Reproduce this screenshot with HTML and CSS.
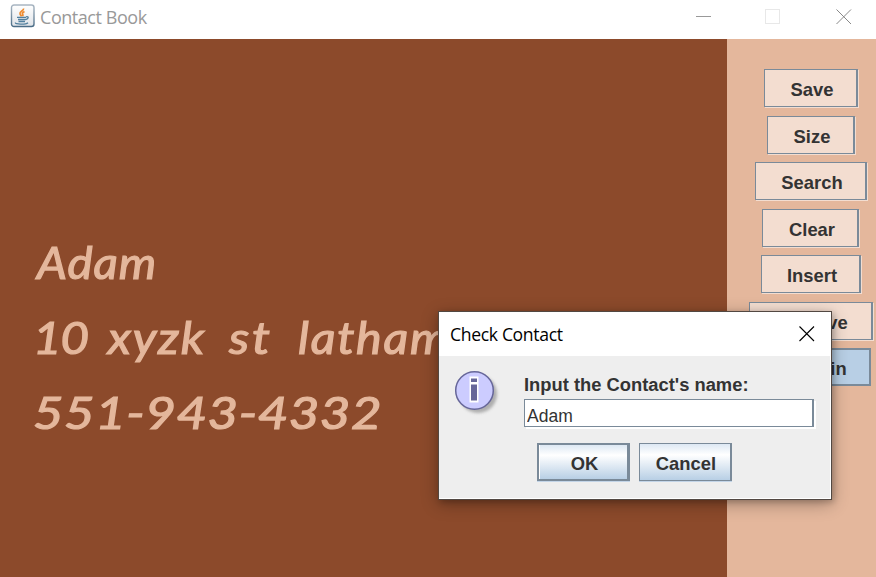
FILE: index.html
```
<!DOCTYPE html>
<html lang="en">
<head>
<meta charset="utf-8">
<title>Contact Book</title>
<link rel="stylesheet" href="styles.css">
</head>
<body>
<header class="titlebar">
  <svg class="java" width="25" height="25" viewBox="0 0 25 25">
    <defs><linearGradient id="ji" x1="0" y1="0" x2="0" y2="1"><stop offset="0" stop-color="#fff"/><stop offset="1" stop-color="#dfe3e8"/></linearGradient>
    <linearGradient id="jb" x1="0" y1="0" x2="0" y2="1"><stop offset="0" stop-color="#a9b6c2"/><stop offset="1" stop-color="#4b6d87"/></linearGradient></defs>
    <rect x="1.500" y="1" width="22.500" height="21.500" rx="2.500" fill="url(#ji)" stroke="url(#jb)" stroke-width="1.400"/>
    <path d="M13.500 4.500c.6 2.200-4.300 3-3.500 5.400.2.900 1 1.500 1.700 2.400M14.500 7.500c-2.400 1.200-2.600 2-1.700 2.900.5.800.2 1.200-.4 1.800" fill="none" stroke="#ee8a2e" stroke-width="1.700"/>
    <path d="M7 13.300h9M8 15.500h8M8.500 17.500h6.500M16 12.800c3.200-.7 2.800 2-.3 2.900M5.500 18.500c-1.200 2 10.500 2.200 12.500.2" fill="none" stroke="#52809f" stroke-width="1.300"/>
  </svg>
  <h1 class="app-name">Contact Book</h1>
  <svg class="controls" width="156" height="16" viewBox="0 0 156 16" fill="none">
    <path d="M0 7.500h15" stroke="#999"/>
    <rect x="69.500" y=".5" width="14" height="14" stroke="#e8e8e8"/>
    <path d="M140.500.5l14.500 14.500M155 .5l-14.500 14.500" stroke="#888"/>
  </svg>
</header>
<main class="workspace">
  <section class="contact">
    <p class="line"><span class="w adam">Adam</span></p>
    <p class="line"><span class="w ten">10</span><span class="w xyzk">xyzk</span><span class="w st">st</span><span class="w latham">latham</span></p>
    <p class="line"><span class="w phone">551-943-4332</span></p>
  </section>
  <nav class="side">
    <button class="btn save">Save</button>
    <button class="btn size">Size</button>
    <button class="btn search">Search</button>
    <button class="btn clear">Clear</button>
    <button class="btn insert">Insert</button>
    <button class="btn remove">Remove</button>
    <button class="btn contain">Contain</button>
  </nav>
</main>
<div class="dialog" role="dialog">
  <div class="dialog-title"><span class="dialog-name">Check Contact</span>
    <svg width="16" height="16" viewBox="0 0 16 16"><path d="M.5.5l14.500 14.500M15 .5L.5 15" stroke="#000" stroke-width="1.100"/></svg>
  </div>
  <div class="dialog-body">
    <svg class="info" width="50" height="50" viewBox="0 0 50 50">
      <defs><filter id="soft"><feGaussianBlur stdDeviation="1.800"/></filter></defs>
      <circle cx="24" cy="24" r="19" fill="#999" opacity=".75" filter="url(#soft)"/>
      <circle cx="20.500" cy="20.500" r="18.800" fill="#ccf" stroke="#669" stroke-width="1.500"/>
      <path d="M15.500 6.500h9v26h-9z" fill="#fff"/>
      <path d="M17 8.500h6v3.500h-6zM17 14.500h6v16h-6z" fill="#669"/>
    </svg>
    <div class="form">
      <label class="prompt" for="name">Input the Contact's name:</label>
      <input class="field" id="name" value="Adam">
      <div class="actions"><button class="action ok">OK</button><button class="action">Cancel</button></div>
    </div>
  </div>
</div>
</body>
</html>
```
FILE: styles.css
```
* { box-sizing: border-box; }
body { margin: 0; width: 876px; height: 577px; overflow: hidden; background: #fff; font-family: "Liberation Sans", Arial, sans-serif; }
.titlebar { display: flex; height: 39px; padding: 4px 24px 0 10px; align-items: flex-start; }
.java { flex: none; }
.app-name { margin: 0 0 0 5px; font: 400 18px/27px "Open Sans", sans-serif; color: #999; letter-spacing: -.45px; flex: 1; }
.controls { margin-top: 5px; }
.workspace { display: flex; height: 538px; }
.contact { width: 727px; background: #8c4a2b; padding: 186px 0 0 37px; }
.line { display: flex; margin: 0; height: 75px; font: italic 400 44px/75px Lato, sans-serif; color: #e4b79c; -webkit-text-stroke: 1.2px #e4b79c; white-space: nowrap; }
.w { flex: none; transform-origin: 0 50%; }
.adam { transform: scaleX(1.08); letter-spacing: .9px; }
.ten { width: 75px; margin-left: -4px; transform: scaleX(1.12); letter-spacing: -1px; }
.xyzk { width: 121px; transform: scaleX(1.12); letter-spacing: 1.6px; }
.st { width: 70px; transform: scaleX(1.15); letter-spacing: 2.5px; }
.latham { margin-left: -1px; transform: scaleX(1.1); letter-spacing: 1.6px; }
.phone { margin-left: -4px; transform: scaleX(1.2); letter-spacing: .4px; }
.side { width: 149px; background: #e4b79c; padding: 30px 0 0 18px; display: flex; flex-direction: column; align-items: center; gap: 8.5px; }
.btn { height: 38px; padding: 4px 0 0 4px; border: 1px solid #7a8a99; border-right-width: 2px; border-radius: 0; background: #f3ddd0; box-shadow: 1px 1px #f3ddd0; color: #333; font: bold 18.4px "Liberation Sans", Arial, sans-serif; }
.save { width: 94px; }
.size { width: 88px; }
.search { width: 112px; }
.clear { width: 97px; }
.insert { width: 100px; }
.remove { width: 124px; }
.contain { width: 120px; border-width: 2px; background: #b8cfe5; box-shadow: none; }
.dialog { position: absolute; left: 438px; top: 311px; width: 394px; height: 189px; border: 1px solid #524842; background: #eee; box-shadow: 0 4px 16px rgba(0,0,0,.3), 2px 2px 6px rgba(0,0,0,.2); }
.dialog-title { display: flex; justify-content: space-between; align-items: center; height: 44px; padding: 0 16px 0 11px; background: #fff; }
.dialog-name { font: 400 17.6px "Open Sans", sans-serif; letter-spacing: -.35px; color: #000; }
.dialog-body { display: flex; height: 143px; padding: 14px 0 0 15px; border: solid #fff; border-width: 0 1px 1px 0; }
.info { flex: none; margin-right: 20px; }
.form { width: 291px; padding-top: 4px; }
.prompt { display: block; height: 25px; font-weight: bold; font-size: 18.35px; line-height: 22px; color: #333; white-space: nowrap; }
.field { display: block; width: 290px; height: 28px; padding: 6px 0 0 2px; border: 1px solid #7a8a99; border-right-width: 2px; border-radius: 0; background: #fff; box-shadow: 2px 2px #fff; color: #333; font: 17.5px "Liberation Sans", Arial, sans-serif; }
.actions { display: flex; gap: 9px; margin: 16px 0 0 13px; }
.action { width: 93px; height: 38px; padding: 4px 0 0 2px; border: 1px solid #7a8a99; border-right-width: 2px; border-radius: 0; background: linear-gradient(#dde8f3 0, #fff 30%, #b8cfe5 100%); box-shadow: 0 1px #c3d5e8; color: #333; font: bold 18.4px "Liberation Sans", Arial, sans-serif; }
.ok { border-width: 2px 3px 2px 2px; padding: 4px 0 0 3px; box-shadow: 0 1px #c3d5e8, inset 1px 0 #fff; }
```
